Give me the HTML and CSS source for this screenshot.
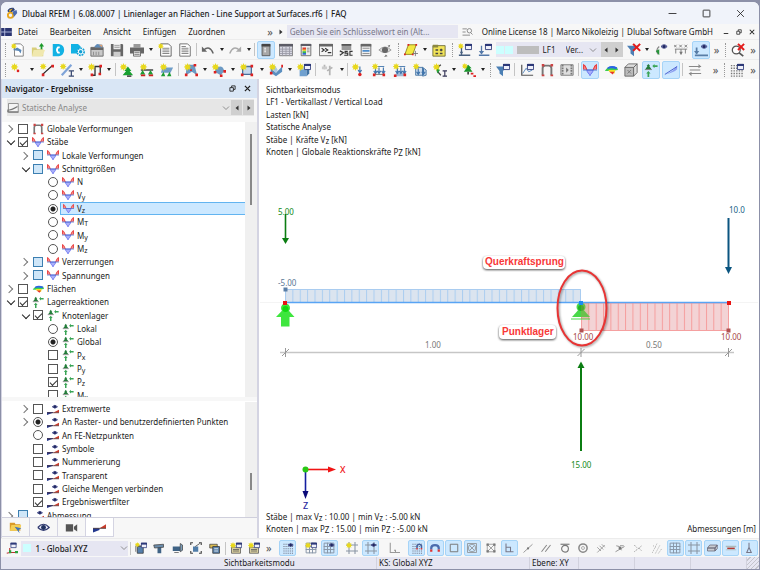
FILE: index.html
```html
<!DOCTYPE html>
<html lang="de">
<head>
    <meta charset="UTF-8">
    <meta name="viewport" content="width=device-width, initial-scale=1.0">
    <title>Dlubal RFEM</title>
    <link rel="stylesheet" href="styles.css">
</head>
<body>
<svg class="defs" aria-hidden="true">
    <defs>
        <path id="star" d="M4 0l1 2.300 2.300-1-1 2.200 2.200 1-2.200 1 1 2.300-2.300-1-1 2.200-1-2.200-2.300 1 1-2.300-2.200-1 2.200-1-1-2.200 2.300 1z" fill="#e8d81c"/>
        <g id="eye"><path d="M8 4q3.500-4 7 0q-3.500 4-7 0" fill="#9aa0d8" stroke="#303878"/><circle cx="11.500" cy="4" r="1.800" fill="#20285f"/></g>
        <g id="win"><path d="M8.500 1.500h7v6h-7z" fill="#eef0fa" stroke="#2c3878"/><path d="M8 1h8v2.500h-8z" fill="#2c3878"/></g>
        <path id="down" d="M0 0v6M-2 4l2 3 2-3" fill="none" stroke="#3f74ac" stroke-width="1.300"/>

        <symbol id="i-new" viewBox="0 0 16 16"><path d="M4 1h7l3 3v11h-10z" fill="#fff" stroke="#777"/><path d="M2 8l5-3 5 3-1 4-2-3z" fill="#5a88b8"/><use href="#star" transform="scale(.8)"/></symbol>
        <symbol id="i-open" viewBox="0 0 16 16"><path d="M1 5h5l1 2h7v8h-13z" fill="#d9cf7c"/><path d="M3 8h13l-3 7h-12z" fill="#f0e8ae"/><path d="M12 0l3 4h-2v3h-2v-3h-2z" fill="#1d9a2b"/></symbol>
        <symbol id="i-dc" viewBox="0 0 16 16"><path d="M2 1h7q6 1 6 7t-6 7h-7z" fill="#12b2e4"/><path d="M10 5h-2q-2.500 3 0 6h2" fill="none" stroke="#fff" stroke-width="2"/></symbol>
        <symbol id="i-dccfg" viewBox="0 0 16 16"><path d="M0 1h8l3 3v8h-11z" fill="#12b2e4"/><circle cx="11" cy="10" r="4" fill="#fff" stroke="#12a0d4" stroke-width="2" stroke-dasharray="2 1"/><circle cx="11" cy="10" r="2" fill="#12a0d4"/></symbol>
        <symbol id="i-pack" viewBox="0 0 16 16"><path d="M1 5h14v10h-14z" fill="#c9c9c9" stroke="#666"/><path d="M1 5h14v3h-14z" fill="#666"/><path d="M5 4l3-3 6 1 1 3h-9z" fill="#5f8bb8"/><path d="M10 2h4v3z" fill="#dfa070"/><path d="M4 10v4M7 10v4M10 10v4" stroke="#888"/></symbol>
        <symbol id="i-save" viewBox="0 0 16 16"><path d="M1 1h13l1 1v13h-14z" fill="#666"/><path d="M4 1h8v6h-8z" fill="#e9e9e9"/><path d="M4 10h8v5h-8z" fill="#ccc"/><path d="M5 3h6M5 5h6" stroke="#999"/></symbol>
        <symbol id="i-print" viewBox="0 0 16 16"><path d="M4 1h8v4h-8z" fill="#999"/><path d="M0 5h16v7h-16z" fill="#666"/><path d="M4 9h8v6h-8z" fill="#eee" stroke="#666"/><path d="M5 11h6M5 13h6" stroke="#777"/></symbol>
        <symbol id="i-report" viewBox="0 0 16 16"><path d="M3 1h9l3 3v11h-12z" fill="#fff" stroke="#555"/><path d="M5 6h8M5 8h8M5 10h8M5 12h8" stroke="#777"/><use href="#star" transform="scale(.8)"/></symbol>
        <symbol id="i-doc" viewBox="0 0 16 16"><path d="M2 1h9l3 3v11h-12z" fill="#fff" stroke="#666"/><path d="M4 4h5M4 6h8M4 8h8M4 10h8M4 12h8" stroke="#777"/></symbol>
        <symbol id="i-undo" viewBox="0 0 16 16"><path d="M3 8q7-6 11 4" fill="none" stroke="#666" stroke-width="1.600"/><path d="M1 4v6h6z" fill="#666"/></symbol>
        <symbol id="i-redo" viewBox="0 0 16 16"><path d="M13 8q-7-6-11 4" fill="none" stroke="#aaa" stroke-width="1.600"/><path d="M15 4v6h-6z" fill="#aaa"/></symbol>
        <symbol id="i-panel" viewBox="0 0 16 16"><path d="M3.500 1.500h9v13h-9z" fill="#a8a8a8" stroke="#555"/><path d="M3 1h10v3h-10z" fill="#444"/><path d="M6 6h2M6 8h2M6 10h2" stroke="#fff"/></symbol>
        <symbol id="i-table" viewBox="0 0 16 16"><path d="M.5 1.500h15v13h-15z" fill="#d8d8e2" stroke="#777"/><path d="M0 1h16v3h-16z" fill="#5c5c66"/><path d="M4 4v11M8 4v11M12 4v11M1 7h14M1 9.500h14M1 12h14" stroke="#9a9aa6"/></symbol>
        <symbol id="i-scale" viewBox="0 0 16 16"><path d="M2.500 1.500h11v13h-11z" fill="#eee" stroke="#666"/><path d="M2 1h12v2.500h-12z" fill="#5c5c66"/><path d="M4 5h4v3h-4z" fill="#e23c30"/><path d="M4 7.500h4v2h-4z" fill="#e8d030"/><path d="M4 9.500h4v2h-4z" fill="#34b84c"/><path d="M4 11.500h4v2h-4z" fill="#3468d0"/><path d="M9 6h3M9 8h3M9 10h3" stroke="#888"/></symbol>
        <symbol id="i-console" viewBox="0 0 16 16"><path d="M.5 1.500h15v13h-15z" fill="#f4f4f4" stroke="#666"/><path d="M0 1h16v3h-16z" fill="#666"/><path d="M3 6l3 2-3 2M7 6l3 2-3 2M10 11h4" fill="none" stroke="#333" stroke-width="1.300"/></symbol>
        <symbol id="i-script" viewBox="0 0 16 16"><path d="M3 1h11v8h-11z" fill="#999"/><path d="M3 1h11v2h-11z" fill="#555"/><path d="M0 8h16v7h-16z" fill="#eee"/><path d="M1 9l4 2-4 3M10 9.500h-3v2h3v2.500h-4M15.500 9.500h-3v4.500h3" fill="none" stroke="#333" stroke-width="1.300"/></symbol>
        <symbol id="i-list" viewBox="0 0 16 16"><path d="M2.500 1.500h11v13h-11z" fill="#eee" stroke="#666"/><path d="M2 1h12v3h-12z" fill="#666"/><path d="M4 6h8M4 12h8" stroke="#888"/><path d="M4 8h8v2h-8z" fill="#4b8ccc"/></symbol>
        <symbol id="i-globe" viewBox="0 0 16 16"><path d="M1 8q7-7 14 0q-7 6-14 0" fill="#ddd" stroke="#999"/><circle cx="8" cy="8" r="3.500" fill="#666"/><path d="M11 3l3-1-1 3M9 13l2 2-4 1" fill="#777"/></symbol>
        <symbol id="i-plane" viewBox="0 0 16 16"><path d="M5 2h9l-4 11h-9z" fill="#f2e840" stroke="#8a8420"/><path d="M4 1h2v2h-2zM13 1h2v2h-2zM0 12h2v2h-2zM9 12h2v2h-2z" fill="#d22"/><path d="M13 9v6M10 12h6" stroke="#777"/></symbol>
        <symbol id="i-ybox" viewBox="0 0 16 16"><path d="M1 3h14v12h-14z" fill="#f2e458" stroke="#6c6a38"/><path d="M1 2h6v3h-6z" fill="#8c8840"/><path d="M4 8h3M4 12h3M9 8h3M9 12h3M10.500 6.500v3" stroke="#444" stroke-width="1.500"/></symbol>
        <symbol id="i-lcnew" viewBox="0 0 16 16"><use href="#win"/><path d="M4 4v9M1 14h13" stroke="#486080" stroke-width="1.500"/><path d="M2 10h4l-2 3z" fill="#486080"/><use href="#star" transform="scale(.8)"/></symbol>
        <symbol id="i-lc" viewBox="0 0 16 16"><use href="#win"/><path d="M4 3v9M1 14h12" stroke="#5478a8" stroke-width="1.500"/><path d="M1 9h6l-3 4z" fill="#5478a8"/></symbol>
        <symbol id="i-funnelx" viewBox="0 0 16 16"><path d="M0 3h12l-4 5v7l-4-3v-4z" fill="#4c7fb5"/><path d="M7 1l8 8M15 1l-8 8" stroke="#e31b1b" stroke-width="2.400"/></symbol>
        <symbol id="i-supeye" viewBox="0 0 16 16"><use href="#eye"/><path d="M6 4q-5 4-1 9" fill="none" stroke="#888" stroke-width="1.500"/><path d="M2 9l4-2v7z" fill="#26953a"/></symbol>
        <symbol id="i-xxx" viewBox="0 0 16 16"><path d="M0 2l3 3M3 2l-3 3M6 2l3 3M9 2l-3 3M12 2l3 3M15 2l-3 3M1 7h14M2 7v5M8 7v5M13 7v5" stroke="#777" fill="none"/><path d="M6 10l2 4 2-4z" fill="#777"/></symbol>
        <symbol id="i-loadeye" viewBox="0 0 16 16"><use href="#eye"/><path d="M3 5v7M1 14h15" stroke="#587da6" stroke-width="2"/><path d="M0 9h6l-3 4z" fill="#587da6"/></symbol>
        <symbol id="i-searchx" viewBox="0 0 16 16"><circle cx="6" cy="8" r="4.500" fill="#fff" stroke="#555" stroke-width="1.500"/><path d="M9 11l5 4" stroke="#555" stroke-width="2"/><path d="M8 1l7 7M15 1l-7 7" stroke="#e31b1b" stroke-width="2.200"/></symbol>

        <symbol id="i-node" viewBox="0 0 16 16"><use href="#star"/><circle cx="8" cy="9" r="1.500" fill="#d22"/></symbol>
        <symbol id="i-line" viewBox="0 0 16 16"><path d="M3 13l11-10" stroke="#222" stroke-width="1.500"/><path d="M2 12h3v3h-3zM13 2h3v3h-3z" fill="#d22"/><use href="#star" transform="scale(.9)"/></symbol>
        <symbol id="i-member" viewBox="0 0 16 16"><path d="M2 14l11-12" stroke="#7fa4d8" stroke-width="2.500"/><path d="M10 9h6M10 15h6M13 9v6" stroke="#3c4c74" stroke-width="1.500"/><use href="#star" transform="scale(.9)"/></symbol>
        <symbol id="i-poly" viewBox="0 0 16 16"><path d="M4 14h4v-10h6v8" fill="none" stroke="#333" stroke-width="1.500"/><path d="M3 12h3v3h-3zM13 2h3v3h-3zM12 11h3v3h-3z" fill="#d22"/><use href="#star"/></symbol>
        <symbol id="i-sup" viewBox="0 0 16 16"><path d="M9 4l4 5h-2l4 5h-12l4-5h-2z" fill="#18a030"/><path d="M8 14h5v2h-5z" fill="#555"/><use href="#star"/></symbol>
        <symbol id="i-sup2" viewBox="0 0 16 16"><path d="M1 8h14" stroke="#444" stroke-width="1.500"/><path d="M3 8l3 5h-6zM12 8l3 5h-6z" fill="#1f9c34"/><path d="M1 14h5M10 14h5" stroke="#c22" stroke-width="2"/><use href="#star"/></symbol>
        <symbol id="i-sup3" viewBox="0 0 16 16"><path d="M3 5h12l-3 6h-11z" fill="#6f9dc8"/><path d="M4 10l2 5h-5zM11 10l2 5h-5z" fill="#1f9c34"/><use href="#star"/></symbol>
        <symbol id="i-surf" viewBox="0 0 16 16"><path d="M3 2h9l3 12-6-4-7 4z" fill="#6c9ac4"/><path d="M11 1h3v3h-3zM1 12h3v3h-3zM13 12h3v3h-3zM7 7h2v2h-2z" fill="#d22"/><use href="#star"/></symbol>
        <symbol id="i-shell" viewBox="0 0 16 16"><path d="M4 6q8-5 10 3l-4 5-7-4z" fill="#6c9ac4"/><path d="M2 9h3v3h-3zM13 8h3v3h-3zM9 13h3v3h-3z" fill="#d22"/><use href="#star"/></symbol>
        <symbol id="i-rect" viewBox="0 0 16 16"><path d="M3 4h10v9h-10z" fill="#c5d8ee" stroke="#486f9c" stroke-width="1.500"/><path d="M12 2h3v3h-3zM1 12h3v3h-3zM12 12h3v3h-3z" fill="#d22"/><use href="#star"/></symbol>
        <symbol id="i-solid" viewBox="0 0 16 16"><path d="M2 6l6 5 7-7v6l-7 5-6-4z" fill="#5b8fc0"/><path d="M2 6l5-3 3 5-2 3z" fill="#a9c8e4"/><path d="M14 2h2v3h-2zM1 10h3v3h-3z" fill="#d22"/><use href="#star"/></symbol>
        <symbol id="i-box" viewBox="0 0 16 16"><path d="M3 7h8v8h-8z" fill="#6fa0cf"/><path d="M11 7l3-3v8l-3 3z" fill="#3f73a4"/><path d="M3 7l3-3h8l-3 3z" fill="#a8c8e6"/><use href="#win"/><use href="#star"/></symbol>
        <symbol id="i-release" viewBox="0 0 16 16"><path d="M4 2v5M10 3v11M7 9l6-4" stroke="#b5b5b5" stroke-width="2"/><path d="M1 4h6v3h-6z" fill="#ccc"/></symbol>
        <symbol id="i-pload" viewBox="0 0 16 16"><use href="#down" transform="translate(9 4)"/><circle cx="9" cy="13" r="2" fill="#d22"/><use href="#star"/></symbol>
        <symbol id="i-lload" viewBox="0 0 16 16"><path d="M2 4h12" stroke="#3f74ac"/><use href="#down" transform="translate(4 5)"/><use href="#down" transform="translate(8 5)"/><use href="#down" transform="translate(13 5)"/><path d="M2 13h12" stroke="#666"/><path d="M1 12h3v3h-3zM12 12h3v3h-3z" fill="#d22"/><use href="#star" transform="scale(.9)"/></symbol>
        <symbol id="i-sload" viewBox="0 0 16 16"><path d="M4 11h11l-3 4h-11z" fill="#9fb9d6"/><path d="M2 4h12" stroke="#3f74ac"/><use href="#down" transform="translate(5 5)"/><use href="#down" transform="translate(9 5)"/><use href="#down" transform="translate(13 5)"/><path d="M1 13h3v3h-3zM12 12h3v3h-3z" fill="#d22"/><use href="#star" transform="scale(.9)"/></symbol>
        <symbol id="i-vload" viewBox="0 0 16 16"><path d="M3 5h8v9h-8zM11 5l4 3v6l-4 1z" fill="#cddcec" stroke="#4474a4"/><use href="#down" transform="translate(6 6)"/><use href="#down" transform="translate(12 6)"/><use href="#star" transform="scale(.9)"/></symbol>
        <symbol id="i-curve" viewBox="0 0 16 16"><path d="M9 2q-8 5 0 12" fill="none" stroke="#444" stroke-width="1.500"/><path d="M3 5l5 3-3 4z" fill="#25a03c"/><path d="M11 9h5M11 15h5M13.500 9v6" stroke="#335" stroke-width="1.300"/><use href="#star"/></symbol>
        <symbol id="i-tree" viewBox="0 0 16 16"><path d="M7 2l4 4h-2l3 4h-10l3-4h-2z" fill="#17962b"/><path d="M10 11h3v2h-3zM13 14h3v2h-3z" fill="#d22"/><path d="M7 10v3" stroke="#444" stroke-width="2"/><use href="#star" transform="scale(.8)"/></symbol>
        <symbol id="i-funnel" viewBox="0 0 16 16"><path d="M0 4h13l-5 5v6l-4-3v-3z" fill="#4b7fb4"/><use href="#win"/></symbol>
        <symbol id="i-graph" viewBox="0 0 16 16"><path d="M2 2v12h13" fill="none" stroke="#555" stroke-width="1.400"/><path d="M3 12l4-6 3 4 4-2" fill="none" stroke="#4c80b8"/><use href="#win"/></symbol>
        <symbol id="i-frame" viewBox="0 0 16 16"><path d="M3 14v-8q0-3 3-3h4q3 0 3 3v8" fill="none" stroke="#777" stroke-width="2.200"/><path d="M2 1h3v3h-3zM12 1h3v3h-3zM2 13h3v2h-3zM12 13h3v2h-3z" fill="#c44"/></symbol>
        <symbol id="i-film" viewBox="0 0 16 16"><path d="M1 2h14v12h-14z" fill="#ddd" stroke="#777"/><path d="M3 2v12M13 2v12" stroke="#777" stroke-width="2" stroke-dasharray="2 1"/><path d="M7 5l3 3-3 3z" fill="#777"/></symbol>
        <symbol id="i-diagram" viewBox="0 0 16 16"><path d="M4.500 8h7q0 2-1.500 3.500t-2 3q-.500-1.500-2-3t-1.500-3.500" fill="#a9b0f8" stroke="#6068f0"/><path d="M.5 8v-6l2 1.500 2 4.500zM15.500 8v-6l-2 1.500-2 4.500z" fill="#f49090"/><path d="M.7 7v-5l1.800 1.500 2 4.500M15.300 7v-5l-1.800 1.500-2 4.500" fill="none" stroke="#e83838" stroke-width="1.200"/><path d="M0 8h16" stroke="#4468c8"/></symbol>
        <symbol id="i-rainbow" viewBox="0 0 16 16"><path d="M1 9q4-7 14-4l1 3-8 1z" fill="#3ccf50"/><path d="M4 5q5-3 11 0l-1 2q-6-2-10 0z" fill="#2b62e8"/><path d="M5 8h8l-1 4-6-2z" fill="#f2e327"/><path d="M6 10h6l-2 3z" fill="#e8332b"/></symbol>
        <symbol id="i-cube" viewBox="0 0 16 16"><path d="M1 5h10v10h-10z" fill="#bbb" stroke="#666"/><path d="M1 5l4-4h10l-4 4zM11 5l4-4v10l-4 4z" fill="#ddd" stroke="#666"/><path d="M4 8l4 4M4 12l4-4" stroke="#777"/></symbol>
        <symbol id="i-react" viewBox="0 0 16 16"><path d="M5 1l2 2.500h-1l2.500 3.500h-7l2.500-3.500h-1z" fill="#237c39"/><path d="M1 7.500h8" stroke="#777"/><path d="M5 9l2.500 3h-1.500v4h-2v-4h-1.500zM9.500 3.500l2.500-2.500v1.500h3.500v2h-3.500v1.500z" fill="#3aa556"/></symbol>
        <symbol id="i-slope" viewBox="0 0 16 16"><path d="M1 13Q9 11 15 3v4q-4 4-14 6z" fill="#8ea0f0"/><path d="M1 13L15 4" stroke="#3c50c8"/></symbol>
        <symbol id="i-bars" viewBox="0 0 16 16"><path d="M1 4h14M1 12h14M2 8h12" stroke="#888" stroke-width="1.400"/><path d="M12 1l3 3-3 2zM4 10l-3 2 3 3z" fill="#888"/></symbol>
        <symbol id="i-gridwin" viewBox="0 0 16 16"><path d="M1 3h14M1 6h14M1 9h14M1 12h14M1 15h14" stroke="#777" stroke-width="1.600" stroke-dasharray="1.600 1.400"/><use href="#win"/></symbol>
        <symbol id="i-eyebar" viewBox="0 0 16 16"><path d="M0 12h8v1l-8 3z" fill="#23388e"/><path d="M8 13l8-4v4z" fill="#c93c2c"/><path d="M0 13h16" stroke="#55383c"/><use href="#eye" transform="translate(-1 1)"/></symbol>

        <symbol id="i-axes" viewBox="0 0 16 16"><path d="M5 8v6h9M5 14l-4 1" fill="none" stroke="#b33" stroke-width="1.500"/><path d="M4 11h3v4h-3zM12 12h4v3h-4z" fill="#2aa33e"/><use href="#win" transform="translate(-2 0)"/></symbol>
        <symbol id="i-v1" viewBox="0 0 16 16"><path d="M3 6h8v9h-8z" fill="#5580ac" stroke="#333"/><path d="M1 5v8M1 5h9" stroke="#555"/><use href="#win"/><use href="#star" transform="scale(.8)"/></symbol>
        <symbol id="i-v2" viewBox="0 0 16 16"><path d="M6 5h5v10h-5z" fill="#3f6385"/><path d="M1 4l13-1v4l-12 1z" fill="#6b8cab" stroke="#444"/></symbol>
        <symbol id="i-v3" viewBox="0 0 16 16"><path d="M1 6h10v6h-10z" fill="#3f6385"/><path d="M11 2l3 2v7l-3 2z" fill="#7a9cba" stroke="#444"/><path d="M3 14h6" stroke="#555"/></symbol>
        <symbol id="i-v4" viewBox="0 0 16 16"><path d="M4 6h7v7h-7z" fill="#4f7ca8"/><path d="M1 4v-3h3M12 1h3v3M1 12v3h3M15 12v3h-3" fill="none" stroke="#444" stroke-width="1.500"/><path d="M7 6l6-4" stroke="#333"/></symbol>
        <symbol id="i-v5" viewBox="0 0 16 16"><path d="M1 3h10v5h-10z" fill="#d8ba50" stroke="#444"/><path d="M5 6h9v9h-9z" fill="#5b83ac" stroke="#333"/><path d="M7 9h5M7 12h5" stroke="#fff"/></symbol>
        <symbol id="i-v6" viewBox="0 0 16 16"><path d="M2 7h12v8h-12z" fill="#d8cfa0" stroke="#555"/><path d="M4 10h8M4 12h8" stroke="#555"/><use href="#win"/><use href="#star"/></symbol>
        <symbol id="i-dots" viewBox="0 0 16 16"><path d="M2 3h13M2 6h13M2 9h13M2 12h13M2 15h13" stroke="#667" stroke-width="1.300" stroke-dasharray="1.300 1.500"/></symbol>
        <symbol id="i-dotseye" viewBox="0 0 16 16"><use href="#i-dots"/><use href="#eye"/></symbol>
        <symbol id="i-grid" viewBox="0 0 16 16"><path d="M1.500 1.500h13v13h-13zM6 1v14M10 1v14M1 6h14M1 10h14" fill="none" stroke="#8896a8" stroke-width="1.300"/></symbol>
        <symbol id="i-grideye" viewBox="0 0 16 16"><use href="#i-grid"/><use href="#eye"/></symbol>
        <symbol id="i-gridnew" viewBox="0 0 16 16"><use href="#i-grid"/><use href="#win"/><use href="#star"/></symbol>
        <symbol id="i-crop" viewBox="0 0 16 16"><path d="M4 0v16M12 0v16M0 4h16M0 12h16" stroke="#8a95a4" stroke-width="1.400"/></symbol>
        <symbol id="i-cropeye" viewBox="0 0 16 16"><use href="#i-crop"/><use href="#eye"/></symbol>
        <symbol id="i-cropnew" viewBox="0 0 16 16"><use href="#i-crop"/><use href="#star"/></symbol>
        <symbol id="i-angle" viewBox="0 0 16 16"><path d="M3 1v13h13M8 11h2v3" fill="none" stroke="#999" stroke-width="1.400"/></symbol>
        <symbol id="i-snapgrid" viewBox="0 0 16 16"><use href="#i-dots"/><path d="M8 8v-3q3-4 6 0v3" fill="none" stroke="#44619e" stroke-width="2"/><path d="M7 8h2v2h-2zM13 8h2v2h-2z" fill="#d33"/></symbol>
        <symbol id="i-magnet" viewBox="0 0 16 16"><path d="M3 10v-2q0-4 5-4t5 4v2" fill="none" stroke="#4b6cae" stroke-width="3"/><path d="M1.500 10h3v3h-3zM11.500 10h3v3h-3z" fill="#d33"/></symbol>
        <symbol id="i-square" viewBox="0 0 16 16"><path d="M3 3h10v10h-10z" fill="none" stroke="#777" stroke-width="1.300"/></symbol>
        <symbol id="i-circx" viewBox="0 0 16 16"><path d="M2 2h12v12h-12zM5 5l6 6M11 5l-6 6" fill="none" stroke="#888"/><circle cx="8" cy="8" r="5" fill="none" stroke="#888"/></symbol>
        <symbol id="i-boxx" viewBox="0 0 16 16"><path d="M3 3h10v10h-10zM3 3l10 10M13 3L3 13" fill="none" stroke="#888"/><path d="M2 2h3v3h-3zM11 2h3v3h-3zM2 11h3v3h-3zM11 11h3v3h-3z" fill="#777"/></symbol>
        <symbol id="i-perp" viewBox="0 0 16 16"><path d="M4 2v11h10M4 7h6v6" fill="none" stroke="#778" stroke-width="1.400"/></symbol>
        <symbol id="i-seg" viewBox="0 0 16 16"><path d="M2 14L14 3" stroke="#999" stroke-width="1.300"/><circle cx="8" cy="8.500" r="1.500" fill="#777"/></symbol>
        <symbol id="i-par" viewBox="0 0 16 16"><path d="M2 13L9 4M7 13L14 4" stroke="#888" stroke-width="1.400"/></symbol>
        <symbol id="i-tan" viewBox="0 0 16 16"><path d="M2 3h12" stroke="#777" stroke-width="1.500"/><circle cx="8" cy="9" r="4.500" fill="none" stroke="#777" stroke-width="1.500"/></symbol>
        <symbol id="i-ring" viewBox="0 0 16 16"><circle cx="8" cy="8" r="5.500" fill="none" stroke="#888" stroke-width="2"/><circle cx="8" cy="8" r="2" fill="none" stroke="#999"/></symbol>
        <symbol id="i-s1" viewBox="0 0 16 16"><path d="M3 14L13 4M3 7l5 5M6 5l5 5M9 3l4 4" stroke="#888"/></symbol>
        <symbol id="i-s2" viewBox="0 0 16 16"><path d="M2 13L14 6M3 5l4 1 3 5M8 5h5" fill="none" stroke="#777"/><circle cx="8" cy="8" r="2" fill="#777"/></symbol>
        <symbol id="i-s3" viewBox="0 0 16 16"><path d="M3 13L13 5M3 4l4 4M9 8l4 4" stroke="#888" stroke-dasharray="2 1"/></symbol>
        <symbol id="i-s4" viewBox="0 0 16 16"><path d="M2 14L8 2M6 15L12 4M10 15L15 8M3 5l3 2" stroke="#888" stroke-width="1.300" stroke-dasharray="1 2"/></symbol>
        <symbol id="i-layer" viewBox="0 0 16 16"><path d="M2 8l3-4h10l-3 4zM2 8h10v4h-10zM12 8l3-4v5l-3 3z" fill="#c8ccd2" stroke="#667"/></symbol>
        <symbol id="i-beam" viewBox="0 0 16 16"><path d="M1 5h14v2h-14zM1 10h14v1h-14z" fill="#abb"/><path d="M3 8.500h10" stroke="#b33a30" stroke-width="2"/></symbol>
        <symbol id="i-pin" viewBox="0 0 16 16"><path d="M8 1v6M8 7l3 7h-6z" fill="none" stroke="#778" stroke-width="1.400"/></symbol>
        <symbol id="i-folder" viewBox="0 0 16 16"><path d="M1 2h6l1 2h6v8h-13z" fill="#d99a28"/><path d="M3 5h12l-2 7h-12z" fill="#f5cf53"/><path d="M7 7l8 2-3 2 1 4-3-4z" fill="#3f73b8"/></symbol>
        <symbol id="i-view" viewBox="0 0 16 16"><path d="M1 8q7-8 14 0q-7 7-14 0" fill="#e8eaf8" stroke="#303a70" stroke-width="1.500"/><circle cx="8" cy="8" r="3" fill="#20305f"/></symbol>
        <symbol id="i-camera" viewBox="0 0 16 16"><path d="M1 4h9v9h-9zM11 7l4-3v9l-4-3z" fill="#555"/></symbol>
        <symbol id="i-results" viewBox="0 0 16 16"><path d="M0 9h8v2l-8 3z" fill="#23388e"/><path d="M8 9l8-5v5z" fill="#c93c2c"/><path d="M0 9h16" stroke="#433"/></symbol>
        <symbol id="i-analysis" viewBox="0 0 16 16"><path d="M2 2h13v12h-13z" fill="#f4f4f4" stroke="#777"/><path d="M0 11q6 0 14-5M0 13h15" fill="none" stroke="#777" stroke-width="1.500"/></symbol>
        <symbol id="i-restore" viewBox="0 0 16 16"><path d="M2 6h8v8h-8zM6 6V2h8v8h-4" fill="none" stroke="#222" stroke-width="2"/></symbol>
        <symbol id="i-close" viewBox="0 0 16 16"><path d="M2 2l12 12M14 2L2 14" stroke="#222" stroke-width="2.800"/></symbol>
        <symbol id="i-closethin" viewBox="0 0 16 16"><path d="M2 2l12 12M14 2L2 14" stroke="#222" stroke-width="1.500"/></symbol>
        <symbol id="i-min" viewBox="0 0 16 16"><path d="M1 8h14" stroke="#222" stroke-width="1.500"/></symbol>
        <symbol id="i-mdimin" viewBox="0 0 16 16"><path d="M2 12h12" stroke="#222" stroke-width="2.400"/></symbol>
        <symbol id="i-max" viewBox="0 0 16 16"><rect x="2" y="2" width="12" height="12" rx="1" fill="none" stroke="#222" stroke-width="1.500"/></symbol>
        <symbol id="i-chev" viewBox="0 0 16 16"><path d="M2 5l6 6 6-6" fill="none" stroke="#777" stroke-width="1.600"/></symbol>
        <symbol id="i-left" viewBox="0 0 16 16"><path d="M11 3v10l-6-5z" fill="#333"/></symbol>
        <symbol id="i-right" viewBox="0 0 16 16"><path d="M5 3v10l6-5z" fill="#333"/></symbol>
        <symbol id="i-find" viewBox="0 0 16 16"><path d="M0 3h7M0 8h5M0 13h12" stroke="#888" stroke-width="1.500"/><circle cx="11" cy="6" r="3.500" fill="none" stroke="#888" stroke-width="1.500"/><path d="M13 9l3 3" stroke="#888" stroke-width="1.500"/></symbol>
    </defs>
</svg>

<div class="window">
    <header class="titlebar">
        <svg class="logo" viewBox="0 0 16 16"><path d="M2 5q2-5 8-4l2 3-5 3q-5 0-5-2" fill="#2a3f78"/><circle cx="6" cy="11" r="3.500" fill="none" stroke="#e8a820" stroke-width="2.500"/><path d="M9 6l5-2 1 4-5 6q1-4-1-5" fill="#4d6cae"/><path d="M4 4l5-2-4 5z" fill="#f0b428"/></svg>
        <h1>Dlubal RFEM | 6.08.0007 | Linienlager an Flächen - Line Support at Surfaces.rf6 | FAQ</h1>
        <div class="window-buttons">
            <button aria-label="Minimieren"><svg><use href="#i-min"/></svg></button>
            <button aria-label="Maximieren"><svg><use href="#i-max"/></svg></button>
            <button aria-label="Schließen"><svg><use href="#i-closethin"/></svg></button>
        </div>
    </header>

    <nav class="menubar">
        <svg class="flag" viewBox="0 0 12 9"><path d="M0 0h12v9H0z" fill="#2a3470"/><path d="M0 4.500h12M4 0v9" stroke="#b8c0e0"/></svg>
        <a href="#">Datei</a>
        <a href="#">Bearbeiten</a>
        <a href="#">Ansicht</a>
        <a href="#">Einfügen</a>
        <a href="#">Zuordnen</a>
        <button class="more" aria-label="Weitere Menüs">»</button>
        <svg class="go"><use href="#i-right"/></svg>
        <input class="search" type="text" aria-label="Schlüsselwort" placeholder="Geben Sie ein Schlüsselwort ein (Alt...">
        <svg class="find"><use href="#i-find"/></svg>
        <span class="license">Online License 18 | Marco Nikoleizig | Dlubal Software GmbH</span>
        <div class="mdi-buttons">
            <button aria-label="Fenster minimieren"><svg><use href="#i-mdimin"/></svg></button>
            <button aria-label="Fenster wiederherstellen"><svg><use href="#i-restore"/></svg></button>
            <button aria-label="Fenster schließen"><svg><use href="#i-close"/></svg></button>
        </div>
    </nav>

    <!-- In data-tools: "|" separator, ":" grip, "v" drop-down arrow, ">" overflow, "_" gap, "*" pressed -->
    <div class="toolbar" role="toolbar" aria-label="Standard">
        <div class="tools" data-tools=": new open dc dccfg pack save print v report doc | undo v redo v | panel* table scale console script list globe : plane v ybox : lcnew lc"></div>
        <div class="combo loadcase">
            <i class="cyan"></i><i class="cyan"></i><i class="gray"></i>
            <span>LF1</span>
            <select aria-label="Lastfall"><option>Ver...</option></select>
            <svg><use href="#i-chev"/></svg>
            <button aria-label="Vorheriger Lastfall"><svg><use href="#i-left"/></svg></button>
            <button aria-label="Nächster Lastfall"><svg><use href="#i-right"/></svg></button>
        </div>
        <div class="tools" data-tools="funnelx v supeye xxx loadeye* > : searchx >"></div>
    </div>
    <div class="toolbar" role="toolbar" aria-label="Modell">
        <div class="tools" data-tools=": node v line member v poly v | sup sup2 sup3 | surf v shell v rect v solid v box | release v | pload lload sload vload curve v tree v : funnel | graph frame film | diagram* rainbow cube react* slope* | bars _ > : gridwin >"></div>
    </div>

    <main class="main">
        <aside class="navigator">
            <div class="dock-title">
                <h2>Navigator - Ergebnisse</h2>
                <button aria-label="Abdocken"><svg><use href="#i-restore"/></svg></button>
                <button aria-label="Navigator schließen"><svg><use href="#i-close"/></svg></button>
            </div>
            <div class="analysis">
                <svg class="icon"><use href="#i-analysis"/></svg>
                <select aria-label="Analyse" disabled><option>Statische Analyse</option></select>
                <svg><use href="#i-chev"/></svg>
                <button aria-label="Zurück"><svg><use href="#i-left"/></svg></button>
                <button aria-label="Vor"><svg><use href="#i-right"/></svg></button>
            </div>

            <div class="tree results">
                <ul>
                    <li><b class="arrow"></b><label><input type="checkbox"><svg><use href="#i-frame"/></svg><span>Globale Verformungen</span></label></li>
                    <li><b class="arrow open"></b><label><input type="checkbox" checked><svg><use href="#i-diagram"/></svg><span>Stäbe</span></label></li>
                    <li class="l2"><b class="arrow"></b><label><input type="checkbox" class="partial"><svg><use href="#i-diagram"/></svg><span>Lokale Verformungen</span></label></li>
                    <li class="l2"><b class="arrow open"></b><label><input type="checkbox" class="partial"><svg><use href="#i-diagram"/></svg><span>Schnittgrößen</span></label></li>
                    <li class="l3"><label><input type="radio" name="force"><svg><use href="#i-diagram"/></svg><span>N</span></label></li>
                    <li class="l3"><label><input type="radio" name="force"><svg><use href="#i-diagram"/></svg><span>V<sub>y</sub></span></label></li>
                    <li class="l3 selected"><label><input type="radio" name="force" checked><svg><use href="#i-diagram"/></svg><span>V<sub>z</sub></span></label></li>
                    <li class="l3"><label><input type="radio" name="force"><svg><use href="#i-diagram"/></svg><span>M<sub>T</sub></span></label></li>
                    <li class="l3"><label><input type="radio" name="force"><svg><use href="#i-diagram"/></svg><span>M<sub>y</sub></span></label></li>
                    <li class="l3"><label><input type="radio" name="force"><svg><use href="#i-diagram"/></svg><span>M<sub>z</sub></span></label></li>
                    <li class="l2"><b class="arrow"></b><label><input type="checkbox" class="partial"><svg><use href="#i-diagram"/></svg><span>Verzerrungen</span></label></li>
                    <li class="l2"><b class="arrow"></b><label><input type="checkbox" class="partial"><svg><use href="#i-diagram"/></svg><span>Spannungen</span></label></li>
                    <li><b class="arrow"></b><label><input type="checkbox"><svg><use href="#i-rainbow"/></svg><span>Flächen</span></label></li>
                    <li><b class="arrow open"></b><label><input type="checkbox" checked><svg><use href="#i-react"/></svg><span>Lagerreaktionen</span></label></li>
                    <li class="l2"><b class="arrow open"></b><label><input type="checkbox" checked><svg><use href="#i-react"/></svg><span>Knotenlager</span></label></li>
                    <li class="l3"><label><input type="radio" name="axis"><svg><use href="#i-react"/></svg><span>Lokal</span></label></li>
                    <li class="l3"><label><input type="radio" name="axis" checked><svg><use href="#i-react"/></svg><span>Global</span></label></li>
                    <li class="l3"><label><input type="checkbox"><svg><use href="#i-react"/></svg><span>P<sub>x</sub></span></label></li>
                    <li class="l3"><label><input type="checkbox"><svg><use href="#i-react"/></svg><span>P<sub>y</sub></span></label></li>
                    <li class="l3"><label><input type="checkbox" checked><svg><use href="#i-react"/></svg><span>P<sub>z</sub></span></label></li>
                    <li class="l3"><label><input type="checkbox"><svg><use href="#i-react"/></svg><span>M<sub>x</sub></span></label></li>
                </ul>
                <div class="scroll"><i></i></div>
            </div>
            <div class="tree display">
                <ul>
                    <li class="l2"><b class="arrow"></b><label><input type="checkbox"><svg><use href="#i-eyebar"/></svg><span>Extremwerte</span></label></li>
                    <li class="l2"><b class="arrow"></b><label><input type="radio" name="points" checked><svg><use href="#i-eyebar"/></svg><span>An Raster- und benutzerdefinierten Punkten</span></label></li>
                    <li class="l2"><b></b><label><input type="radio" name="points"><svg><use href="#i-eyebar"/></svg><span>An FE-Netzpunkten</span></label></li>
                    <li class="l2"><b></b><label><input type="checkbox"><svg><use href="#i-eyebar"/></svg><span>Symbole</span></label></li>
                    <li class="l2"><b></b><label><input type="checkbox"><svg><use href="#i-eyebar"/></svg><span>Nummerierung</span></label></li>
                    <li class="l2"><b></b><label><input type="checkbox"><svg><use href="#i-eyebar"/></svg><span>Transparent</span></label></li>
                    <li class="l2"><b></b><label><input type="checkbox"><svg><use href="#i-eyebar"/></svg><span>Gleiche Mengen verbinden</span></label></li>
                    <li class="l2"><b></b><label><input type="checkbox" checked><svg><use href="#i-eyebar"/></svg><span>Ergebniswertfilter</span></label></li>
                    <li><b class="arrow"></b><label><input type="checkbox" class="partial"><svg><use href="#i-eyebar"/></svg><span>Abmessung</span></label></li>
                </ul>
                <div class="scroll"><i></i></div>
            </div>

            <div class="tabs">
                <button aria-label="Daten"><svg><use href="#i-folder"/></svg></button>
                <button aria-label="Zeigen"><svg><use href="#i-view"/></svg></button>
                <button aria-label="Ansichten"><svg><use href="#i-camera"/></svg></button>
                <button class="current" aria-label="Ergebnisse"><svg><use href="#i-results"/></svg></button>
            </div>
        </aside>

        <section class="viewport">
            <svg class="model" viewBox="259 79 500 459" preserveAspectRatio="xMinYMin meet">
                <defs>
                    <pattern id="hatchBlue" patternUnits="userSpaceOnUse" x="285" y="289" width="7.375" height="14"><path d="M.5 0v14" stroke="#aacdf0"/></pattern>
                    <pattern id="hatchRed" patternUnits="userSpaceOnUse" x="581" y="303" width="7.350" height="28"><path d="M.5 0v28" stroke="#f59c9c"/></pattern>
                </defs>
                <path d="M260 302.500h498" stroke="#f4f4f4"/>

                <!-- Querkraft -->
                <path d="M285 289h296v14h-296z" fill="#dbe4ef"/>
                <path d="M285.500 289.500h295v13h-295z" fill="url(#hatchBlue)" stroke="#a9ccf0"/>
                <path d="M581 303h147v27h-147z" fill="#f3d3d5"/>
                <path d="M581.500 303h147v27.500h-147z" fill="url(#hatchRed)" stroke="#f5a0a0"/>

                <!-- Lager -->
                <g fill="#3ee63e"><circle cx="285.500" cy="308" r="4.500"/><path d="M285.500 307l9 10h-5v9.500h-8.500v-9.500h-5z"/><circle cx="285.500" cy="309" r="3" fill="#12d812"/></g>
                <g fill="#48d848"><circle cx="581" cy="307" r="4.500"/><path d="M581 307l9 10h-18z"/><path d="M571 318.500h19v1h-19z"/><circle cx="581" cy="308" r="3" fill="#24b324"/></g>
                <path d="M581 303h8v16h-8z" fill="#b98a55" opacity=".3"/>
                <path d="M285 302.500h444" stroke="#58a4f4" stroke-width="1.600"/>
                <path d="M283 301h4v4h-4zM727 301h4v4h-4z" fill="#e81414"/>
                <path d="M579 301h4v4h-4z" fill="#1c8cf0"/>
                <path d="M283.500 287.500h4v4h-4z" fill="#5a7ea6"/>
                <path d="M579.500 328.500h4v4h-4zM726.500 328.500h4v4h-4z" fill="#b05050"/>

                <!-- Kräfte -->
                <g fill="#0b7d12"><path d="M284.700 214h1.600v26h-1.600z"/><path d="M282 238h7l-3.500 6z"/><path d="M580 366h2v85h-2z"/><path d="M577.500 368h7l-3.500-6.500z"/></g>
                <g fill="#0b5580"><path d="M727.500 218h2v51h-2z"/><path d="M725 267h7l-3.500 7z"/></g>

                <!-- Maßkette -->
                <path d="M280 352.500h454" stroke="#c6c6c6" stroke-width="1.400"/>
                <path d="M285.500 348v9M282 356l7-7M581 348v9M577.500 356l7-7M728.500 348v9M725 356l7-7" stroke="#999"/>

                <g class="values">
                    <text class="green" x="278" y="215">5.00</text>
                    <text class="steel" x="278" y="286">-5.00</text>
                    <text class="blue" x="729" y="213">10.0</text>
                    <text class="gray" x="425" y="348">1.00</text>
                    <text class="gray" x="646" y="348">0.50</text>
                    <text class="dark-red" x="573" y="340">10.00</text>
                    <text class="dark-red" x="721" y="340">10.00</text>
                    <text class="green" x="571" y="468">15.00</text>
                </g>

                <!-- Achsenkreuz -->
                <path d="M306 469.500h24" stroke="#f01414" stroke-width="1.600"/><path d="M328 466.500v6l8-3z" fill="#f01414"/>
                <path d="M305.500 470v22" stroke="#141ea0" stroke-width="1.600"/><path d="M302.500 491h6l-3 8z" fill="#0a0a78"/>
                <circle cx="305.500" cy="469.500" r="3" fill="#28c814"/>
                <text class="axis red" x="340" y="473">X</text>
                <text class="axis navy" x="303" y="509">Z</text>

                <!-- Anmerkungen -->
                <g class="callout"><rect x="483" y="256" width="82" height="13" rx="4"/><text x="485" y="265">Querkraftsprung</text></g>
                <g class="callout"><rect x="499" y="325" width="57" height="14" rx="4"/><text x="502" y="335">Punktlager</text></g>
                <ellipse class="mark" cx="582" cy="308" rx="24.500" ry="37.500"/>
            </svg>
            <div class="info">
                <p>Sichtbarkeitsmodus</p>
                <p>LF1 - Vertikallast / Vertical Load</p>
                <p>Lasten [kN]</p>
                <p>Statische Analyse</p>
                <p>Stäbe | Kräfte V<sub>z</sub> [kN]</p>
                <p>Knoten | Globale Reaktionskräfte P<sub>Z</sub> [kN]</p>
            </div>
            <div class="summary">
                <div>
                    <p>Stäbe | max V<sub>z</sub> : 10.00 | min V<sub>z</sub> : -5.00 kN</p>
                    <p>Knoten | max P<sub>Z</sub> : 15.00 | min P<sub>Z</sub> : -5.00 kN</p>
                </div>
                <p>Abmessungen [m]</p>
            </div>
        </section>
    </main>

    <div class="toolbar snapbar" role="toolbar" aria-label="Fang">
        <div class="tools" data-tools="axes"></div>
        <div class="combo system">
            <i class="cyan"></i>
            <select aria-label="Koordinatensystem"><option>1 - Global XYZ</option></select>
            <svg><use href="#i-chev"/></svg>
        </div>
        <div class="tools" data-tools="| v1 v2 v3 v4 v5 | v6 v6 > _ dotseye* _ gridnew grideye* _ cropnew cropeye* _ angle _ snapgrid* magnet* square* circx* boxx perp* seg par tan ring s1 s2 s3 s4 grid* crop* layer* beam* pin*"></div>
    </div>

    <footer class="statusbar">
        <span class="mode">Sichtbarkeitsmodu</span>
        <span class="cs">KS: Global XYZ</span>
        <span class="level">Ebene: XY</span>
        <span></span>
        <span></span>
        <span></span>
        <span class="grip"></span>
    </footer>
</div>

<script>
const marks = { '|': 'sep', ':': 'handle', '_': 'space' };

function makeTool(token) {
    if (marks[token]) {
        const mark = document.createElement('span');
        mark.className = marks[token];
        return mark;
    }
    const button = document.createElement('button');
    if (token === 'v') {
        button.className = 'drop';
        button.setAttribute('aria-label', 'Auswahl');
    } else if (token === '>') {
        button.className = 'more';
        button.textContent = '»';
    } else {
        const name = token.replace('*', '');
        button.className = token.endsWith('*') ? 'tool pressed' : 'tool';
        button.setAttribute('aria-label', name);
        button.innerHTML = `<svg><use href="#i-${name}"/></svg>`;
    }
    return button;
}

document.querySelectorAll('.tools').forEach(group => {
    group.dataset.tools.split(' ').forEach(token => group.append(makeTool(token)));
});
</script>
</body>
</html>
```
FILE: styles.css
```css
:root {
    --lavender: #e6e6f2;
    --bar: #f7f7f7;
    --press: #cce8ff;
    --press-border: #a6d4f7;
}

* {
    box-sizing: border-box;
}

body {
    margin: 0;
    height: 100vh;
    padding: 2px 1px 1px;
    overflow: hidden;
    background: #8c90a8;
    font-family: "Noto Sans", "Open Sans", sans-serif;
    font-size: 8px;
    color: #1a1a1a;
}

h1, h2, p, ul {
    margin: 0;
    padding: 0;
    font-weight: normal;
}

button, select, input {
    appearance: none;
    margin: 0;
    padding: 0;
    border: 0;
    border-radius: 0;
    background: none;
    font: inherit;
    color: inherit;
}

button {
    display: flex;
    align-items: center;
    justify-content: center;
}

svg {
    display: block;
    flex: none;
}

.defs {
    position: absolute;
    width: 0;
    height: 0;
}

.window {
    height: 100%;
    display: flex;
    flex-direction: column;
    background: var(--bar);
    border-radius: 6px 6px 0 0;
    overflow: hidden;
}

/* Titelleiste */
.titlebar {
    height: 22px;
    flex: none;
    display: flex;
    align-items: center;
    background: #f0f3fa;
    padding-left: 5px;
}

.titlebar h1 {
    flex: 1;
    margin-left: 4px;
    font-size: 8px;
    font-weight: 500;
    white-space: nowrap;
}

.logo {
    width: 12px;
    height: 12px;
}

.window-buttons {
    display: flex;
    padding-right: 2px;
}

.window-buttons button {
    width: 34px;
}

.window-buttons svg {
    width: 9px;
    height: 9px;
}

/* Menü */
.menubar {
    height: 15px;
    flex: none;
    display: flex;
    align-items: center;
    font-size: 8px;
    white-space: nowrap;
}

.menubar a {
    color: inherit;
    text-decoration: none;
    margin-right: 12px;
}

.flag {
    width: 11px;
    height: 8px;
    margin-right: 6px;
}

.more {
    width: 9px;
    font-size: 11px;
    line-height: 12px;
    color: #555;
}

.menubar .more {
    margin-left: auto;
}

.go {
    width: 8px;
    height: 8px;
    margin: 0 2px;
}

.search {
    width: 171px;
    height: 13px;
    padding-left: 3px;
    background: var(--lavender);
}

.search::placeholder {
    color: #777788;
    opacity: 1;
}

.find {
    width: 11px;
    height: 10px;
    margin: 0 9px 0 4px;
}

.mdi-buttons {
    display: flex;
    padding: 0 1px 0 6px;
}

.mdi-buttons button {
    width: 13px;
}

.mdi-buttons svg {
    width: 6px;
    height: 6px;
}

/* Werkzeugleisten */
.toolbar {
    height: 20px;
    flex: none;
    display: flex;
    align-items: center;
    justify-content: space-between;
    padding: 0 1px 0 2px;
    border-top: 1px solid #ececec;
}

.tools {
    display: contents;
}

.tool {
    width: 18px;
    height: 18px;
    border: 1px solid transparent;
    border-radius: 2px;
}

.tool svg {
    width: 14px;
    height: 14px;
}

.pressed {
    background: var(--press);
    border-color: var(--press-border);
}

.drop::before {
    content: "";
    margin: 0 1px;
    border: 2px solid transparent;
    border-top: 3px solid #222;
    border-bottom: 0;
}

.sep {
    width: 1px;
    height: 13px;
    background: #c4c4c4;
}

.handle {
    height: 14px;
    margin: 0 1px 0 2px;
    border-left: 1px dotted #999;
}

.combo {
    height: 15px;
    display: flex;
    align-items: center;
    background: var(--lavender);
}

.combo i {
    width: 8px;
    height: 8px;
    margin-right: 1px;
}

.combo .cyan {
    background: #ccffff;
}

.combo .gray {
    width: 22px;
    margin: 0 4px 0 3px;
    background: #bdbdbd;
}

.combo svg {
    width: 8px;
    height: 8px;
}

.combo button {
    width: 11px;
    height: 15px;
    background: #cfcfcf;
}

.loadcase {
    width: 127px;
}

.loadcase span {
    margin-right: 10px;
}

.loadcase select {
    flex: 1;
    min-width: 0;
}

.loadcase > svg {
    margin-right: 4px;
}

.snapbar {
    height: 19px;
}

.snapbar .tool {
    width: 17px;
    height: 16px;
}

.snapbar .tool svg {
    width: 12px;
    height: 12px;
}

.system {
    width: 107px;
    font-weight: 500;
}

.system i {
    margin: 0 4px 0 2px;
}

.system select {
    flex: 1;
}

.space {
    width: 3px;
}

/* Hauptbereich */
.main {
    flex: 1;
    min-height: 0;
    display: flex;
}

.navigator {
    width: 258px;
    flex: none;
    display: flex;
    flex-direction: column;
    border-right: 2px solid #d4d4e2;
    border-left: 1px solid #d4d4e2;
}

.dock-title {
    height: 19px;
    flex: none;
    display: flex;
    align-items: center;
    background: #d9e6f5;
    padding: 0 2px 0 3px;
}

.dock-title h2 {
    flex: 1;
    font-size: 8px;
    font-weight: 600;
}

.dock-title button {
    width: 15px;
}

.dock-title svg {
    width: 7px;
    height: 7px;
}

.analysis {
    height: 17px;
    flex: none;
    display: flex;
    align-items: center;
    margin: 1px 3px 6px 5px;
    background: #e6e6e6;
    color: #888;
}

.analysis svg {
    width: 8px;
    height: 8px;
}

.analysis .icon {
    width: 12px;
    height: 12px;
}

.analysis select {
    flex: 1;
    margin-left: 3px;
    opacity: 1;
    color: #888;
}

.analysis button {
    width: 11px;
    height: 15px;
    margin-left: 1px;
    background: #cfcfcf;
}

.tree {
    display: flex;
    min-height: 0;
    background: #fff;
    font-weight: 500;
    overflow: hidden;
}

.tree.results {
    flex: 12 1 0;
    border-bottom: 4px solid var(--bar);
}

.tree.display {
    flex: 5 1 0;
    padding-top: 1px;
    border-bottom: 1px solid #cfcfdc;
}

.tree ul {
    flex: 1;
    list-style: none;
    white-space: nowrap;
}

.tree li {
    height: 13px;
    display: flex;
    align-items: center;
    padding-left: 4px;
}

.tree li:nth-child(3n) {
    height: 14px;
}

.tree .l2 {
    padding-left: 19px;
}

.tree .l3 {
    padding-left: 46px;
}

.tree b {
    width: 12px;
    height: 7px;
    flex: none;
}

.arrow::before {
    content: "";
    display: block;
    width: 5px;
    height: 5px;
    margin-top: 1px;
    border: solid #777;
    border-width: 1px 1px 0 0;
    transform: rotate(45deg);
}

.arrow.open::before {
    margin: 0 0 0 2px;
    border-color: #222;
    transform: rotate(135deg);
}

.tree label {
    flex: 1;
    height: 100%;
    display: flex;
    align-items: center;
}

.tree label svg {
    width: 12px;
    height: 12px;
    margin: 0 2px 0 4px;
}

.tree label span {
    height: 13px;
    flex: 1;
    padding-left: 1px;
    line-height: 13px;
}

.tree sub {
    font-size: 7px;
    line-height: 0;
    vertical-align: -1px;
}

.tree .selected svg,
.tree .selected span {
    height: 13px;
    border: solid #62b4f0;
    border-width: 1px 0;
    background: #cce8ff;
    line-height: 11px;
}

.tree .selected svg {
    width: 16px;
    margin: 0 0 0 2px;
    border-left-width: 1px;
}

.tree input {
    width: 10px;
    height: 10px;
    flex: none;
    border: 1px solid #555;
    background: #fff;
}

.tree input[type="radio"] {
    border-radius: 50%;
}

.tree input[type="radio"]:checked {
    background: radial-gradient(circle, #222 2px, #fff 3px);
}

.tree input[type="checkbox"]:checked::before {
    content: "";
    display: block;
    width: 6px;
    height: 3px;
    margin: 2px 0 0 1px;
    border: solid #333;
    border-width: 0 0 1px 1px;
    transform: rotate(-45deg);
}

.tree .partial {
    border-color: #3c7fb1;
    background: #cfe6f8;
}

.scroll {
    width: 12px;
    background: #f0f0f0;
}

.scroll i {
    display: block;
    width: 2px;
    height: 71px;
    margin: 12px 0 0 5px;
    background: #888;
}

.display .scroll i {
    height: 17px;
    margin-top: 71px;
}

.tabs {
    height: 20px;
    flex: none;
    display: flex;
    padding-bottom: 1px;
}

.tabs button {
    width: 28px;
    border-right: 1px solid #d4d4e2;
    border-bottom: 1px solid #d4d4e2;
}

.tabs .current {
    background: #fff;
}

.tabs svg {
    width: 13px;
    height: 13px;
}

/* Arbeitsfenster */
.viewport {
    flex: 1;
    position: relative;
    display: flex;
    flex-direction: column;
    justify-content: space-between;
    padding: 4px 3px 3px 7px;
    background: #fff;
    font-weight: 500;
}

.viewport p {
    line-height: 13px;
    white-space: nowrap;
}

.viewport p:nth-child(2n) {
    line-height: 12px;
}

.viewport sub {
    font-size: 8px;
    line-height: 0;
    vertical-align: -1px;
}

.model {
    position: absolute;
    top: 0;
    left: 0;
    width: 100%;
    height: 100%;
    overflow: visible;
}

.info, .summary {
    position: relative;
}

.summary {
    display: flex;
    justify-content: space-between;
    align-items: flex-end;
}

.values text {
    font-size: 8px;
    font-weight: 400;
}

.green { fill: #128a18; }
.steel { fill: #5a7896; }
.blue { fill: #1a5f88; }
.gray { fill: #777; }
.dark-red { fill: #a84848; }
.red { fill: #f01414; }
.navy { fill: #2a2aa0; }

.axis {
    font-size: 9px;
}

.callout rect {
    fill: #fff;
    filter: drop-shadow(0 1px 1px rgba(0, 0, 0, 0.7));
}

.callout text {
    font-family: "Liberation Sans", Arial, sans-serif;
    font-size: 10px;
    font-weight: bold;
    fill: #f83838;
}

.mark {
    fill: none;
    stroke: #e83434;
    stroke-width: 2;
    filter: drop-shadow(1px 1px 1px rgba(0, 0, 0, 0.4));
}

/* Statusleiste */
.statusbar {
    height: 12px;
    flex: none;
    display: flex;
    background: var(--lavender);
    font-size: 8px;
    line-height: 12px;
    white-space: nowrap;
}

.statusbar span {
    width: 56px;
    flex: none;
    padding-left: 2px;
    border-left: 1px solid #d2d2de;
}

.statusbar .mode {
    flex: 1;
    padding-left: 223px;
    border: 0;
}

.statusbar .cs {
    width: 153px;
}

.statusbar .level {
    width: 49px;
}

.statusbar .grip {
    width: 13px;
    background: repeating-linear-gradient(135deg, transparent 0 2px, #c4c4cc 2px 3px);
}
```
